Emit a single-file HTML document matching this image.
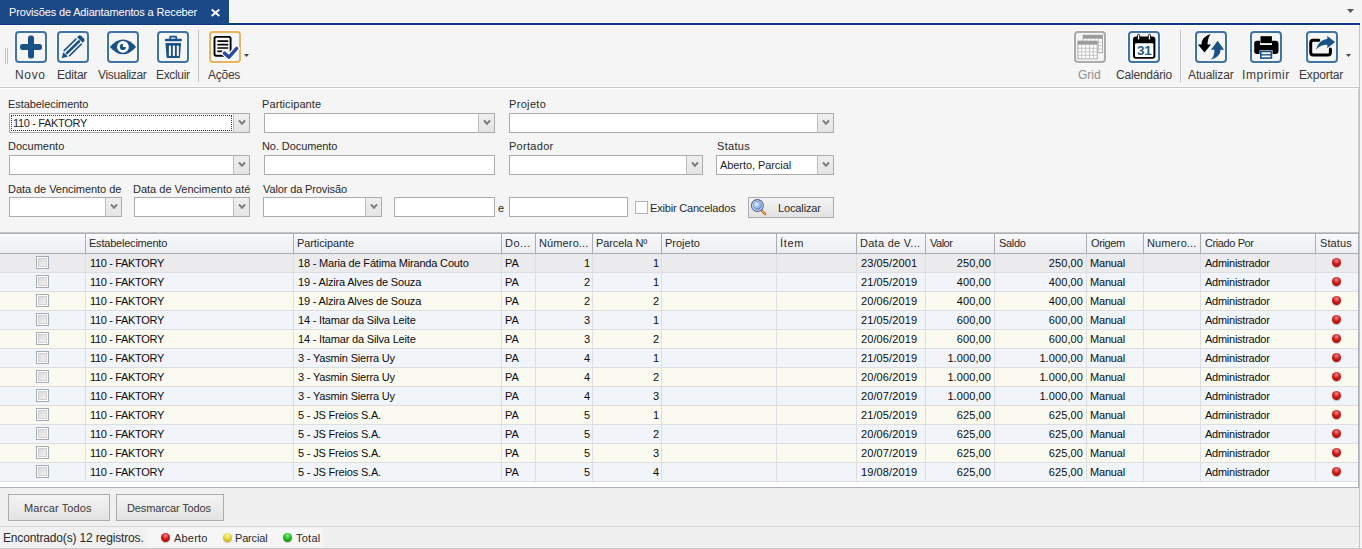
<!DOCTYPE html><html><head><meta charset="utf-8"><style>
html,body{margin:0;padding:0}
body{width:1362px;height:549px;position:relative;overflow:hidden;background:#f5f5f5;font-family:"Liberation Sans", sans-serif}
.t{position:absolute;white-space:nowrap;line-height:1}
.r{position:absolute}
.cb{background:#fff;border:1px solid #ababab}
.cbb{background:linear-gradient(#efefef,#e4e4e4);border-left:1px solid #bdbdbd}
.btn{background:linear-gradient(#f4f4f4,#e2e2e2);border:1px solid #acacac}
.ck{width:11px;height:11px;border:1px solid #a3abb7;background:#fff;box-sizing:content-box}
.ck::after{content:"";position:absolute;left:1px;top:1px;width:7px;height:7px;border:1px solid #d0d0d0;background:linear-gradient(135deg,#dcdcdc,#f0f0f0)}
.dot{width:9px;height:9px;border-radius:50%}
.red{background:radial-gradient(circle at 50% 30%,#f59090 0,#d01c1c 42%,#9a0000 100%);box-shadow:0 1px 1px rgba(0,0,0,0.25)}
.yel{background:radial-gradient(circle at 50% 30%,#fff8b0 0,#e6d63a 45%,#b09a00 100%);box-shadow:0 1px 1px rgba(0,0,0,0.2)}
.grn{background:radial-gradient(circle at 50% 30%,#90f090 0,#22b822 45%,#007a00 100%);box-shadow:0 1px 1px rgba(0,0,0,0.2)}
</style></head><body><div class="r" style="left:0px;top:0px;width:229px;height:24px;background:#1b4886;"></div>
<div class="r" style="left:229px;top:0px;width:1px;height:22px;background:#ffffff;"></div>
<div class="r" style="left:229px;top:22px;width:1131px;height:1px;background:#ffffff;"></div>
<div class="r" style="left:229px;top:23px;width:1131px;height:1px;background:#0a3a82;"></div>
<div class="r" style="left:0px;top:24px;width:1360px;height:1px;background:#0b3a80;"></div>
<div class="r" style="left:0px;top:25px;width:1359px;height:1px;background:#ffffff;"></div>
<div class="t" style="left:9px;top:6.86px;font-size:11px;color:#ffffff;letter-spacing:-0.143px;">Provisões de Adiantamentos a Receber</div>
<svg class="r" style="left:210px;top:8px" width="12" height="10"><path d="M1.7 1.6 L9.3 7.9 M9.3 1.6 L1.7 7.9" stroke="#fff" stroke-width="2"/></svg>
<svg class="r" style="left:1346px;top:8px" width="10" height="7"><path d="M1 1 H8 L4.5 5 Z" fill="#555"/></svg>
<div class="r" style="left:1359px;top:25px;width:1px;height:524px;background:#c4c4c4;"></div>
<div class="r" style="left:1358px;top:89px;width:1px;height:143px;background:#c8c8c8;"></div>
<div class="r" style="left:1357px;top:89px;width:1px;height:143px;background:#fbfbfb;"></div>
<div class="r" style="left:5px;top:48px;width:1px;height:16px;background:#c4c4c4;"></div>
<div class="r" style="left:7px;top:48px;width:1px;height:16px;background:#c4c4c4;"></div>
<div class="r" style="left:198px;top:30px;width:1px;height:52px;background:#c6c6c6;"></div>
<div class="r" style="left:1180px;top:30px;width:1px;height:52px;background:#c6c6c6;"></div>
<div class="r" style="left:0px;top:86px;width:1359px;height:1px;background:#f9f9f9;"></div>
<div class="r" style="left:0px;top:87px;width:1359px;height:1px;background:#c8c8c8;"></div>
<div class="r" style="left:0px;top:88px;width:1359px;height:1px;background:#fbfbfb;"></div>
<svg class="r" style="left:14px;top:30px" width="34" height="34" viewBox="-1 -1 34 34"><rect x="-0.5" y="-0.5" width="33" height="33" rx="4" fill="none" stroke="#fff" stroke-width="1" opacity="0.8"/><rect x="1" y="1" width="30" height="30" rx="3" fill="none" stroke="#3f74a3" stroke-width="2"/><rect x="5" y="13" width="22" height="6" rx="2.5" fill="#1a5286"/><rect x="13" y="4.5" width="6" height="23" rx="2.5" fill="#1a5286"/></svg>
<svg class="r" style="left:56px;top:30px" width="34" height="34" viewBox="-1 -1 34 34"><rect x="-0.5" y="-0.5" width="33" height="33" rx="4" fill="none" stroke="#fff" stroke-width="1" opacity="0.8"/><rect x="1" y="1" width="30" height="30" rx="3" fill="none" stroke="#3f74a3" stroke-width="2"/><g fill="#1a5286"><path d="M4.8 27.2 L6.2 21.2 L11 25.6 Z"/><path d="M7.1 19.6 L18.9 8.1" stroke="#1a5286" stroke-width="1.5" stroke-linecap="round"/><path d="M9.9 22.1 L21.9 10.5" stroke="#1a5286" stroke-width="2.6" stroke-linecap="round"/><path d="M12.6 24.6 L24.3 13.1" stroke="#1a5286" stroke-width="1.5" stroke-linecap="round"/><path d="M20.1 6.2 L21.23 5.07 Q22.79 3.51 24.37 5.04 L26.91 7.48 Q28.49 9.01 26.93 10.57 L25.8 11.7 Z"/></g></svg>
<svg class="r" style="left:106px;top:30px" width="34" height="34" viewBox="-1 -1 34 34"><rect x="-0.5" y="-0.5" width="33" height="33" rx="4" fill="none" stroke="#fff" stroke-width="1" opacity="0.8"/><rect x="1" y="1" width="30" height="30" rx="3" fill="none" stroke="#3f74a3" stroke-width="2"/><path d="M2.9 15.9 Q16 1.2 29.1 15.9 Q16 30.6 2.9 15.9 Z" fill="#1a5286"/><circle cx="15.9" cy="15.9" r="5.9" fill="#fff"/><circle cx="15.9" cy="15.9" r="3.1" fill="#1a5286"/><path d="M15.9 15.9 L15.9 12.5 A3.4 3.4 0 0 1 19.3 15.9 Z" fill="#fff"/></svg>
<svg class="r" style="left:156px;top:30px" width="34" height="34" viewBox="-1 -1 34 34"><rect x="-0.5" y="-0.5" width="33" height="33" rx="4" fill="none" stroke="#fff" stroke-width="1" opacity="0.8"/><rect x="1" y="1" width="30" height="30" rx="3" fill="none" stroke="#3f74a3" stroke-width="2"/><g fill="#1a5286"><rect x="7.8" y="7.8" width="17" height="2.4" rx="1"/><path d="M12.4 8 V5.6 Q12.4 4.8 13.2 4.8 H19.2 Q20 4.8 20 5.6 V8 H18.4 V6.4 H14 V8 Z"/><path d="M8.5 12 H24 L23 26 Q22.9 27 21.9 27 H10.6 Q9.6 27 9.5 26 Z"/></g><g fill="#fff"><rect x="11.9" y="14.7" width="2" height="10.2"/><rect x="15.8" y="14.7" width="2.1" height="10.2"/><rect x="19.8" y="14.7" width="2" height="10.2"/></g></svg>
<svg class="r" style="left:208px;top:30px" width="34" height="34" viewBox="-1 -1 34 34"><rect x="-0.5" y="-0.5" width="33" height="33" rx="4" fill="none" stroke="#fff" stroke-width="1" opacity="0.8"/><rect x="1" y="1" width="30" height="30" rx="3" fill="#f3f6fb" stroke="#eab25a" stroke-width="2"/><rect x="5.5" y="5.9" width="16.1" height="18.8" rx="1.6" fill="#fff" stroke="#000" stroke-width="1.9"/><g stroke="#000" stroke-width="1.7" stroke-linecap="round"><path d="M9 10.1 H18.6"/><path d="M9 13.6 H18.6"/><path d="M9 17 H18.6"/><path d="M9 20.3 H13"/></g><path d="M15.4 22.1 L20 26.1 L27.7 17.4" fill="none" stroke="#fff" stroke-width="6" stroke-linecap="round" stroke-linejoin="round"/><path d="M15.4 22.1 L20 26.1 L27.7 17.4" fill="none" stroke="#2f4aa0" stroke-width="3.4" stroke-linecap="round" stroke-linejoin="round"/></svg>
<svg class="r" style="left:243px;top:53px" width="8" height="6"><path d="M1 1 H6 L3.5 4 Z" fill="#444"/></svg>
<svg class="r" style="left:1073px;top:30px" width="34" height="34" viewBox="-1 -1 34 34"><rect x="-0.5" y="-0.5" width="33" height="33" rx="4" fill="none" stroke="#fff" stroke-width="1" opacity="0.8"/><rect x="1" y="1" width="30" height="30" rx="3" fill="none" stroke="#ababab" stroke-width="2"/><rect x="9.1" y="4.2" width="19.4" height="17.4" fill="#fff" stroke="#aaa" stroke-width="1"/><rect x="9.1" y="4.2" width="19.4" height="3.5" fill="#9a9a9a"/><path d="M12.98 7.7 V21.599999999999998" stroke="#c4c4c4" stroke-width="1"/><path d="M16.86 7.7 V21.599999999999998" stroke="#c4c4c4" stroke-width="1"/><path d="M20.74 7.7 V21.599999999999998" stroke="#c4c4c4" stroke-width="1"/><path d="M24.62 7.7 V21.599999999999998" stroke="#c4c4c4" stroke-width="1"/><path d="M9.1 11.18 H28.5" stroke="#c4c4c4" stroke-width="1"/><path d="M9.1 14.65 H28.5" stroke="#c4c4c4" stroke-width="1"/><path d="M9.1 18.12 H28.5" stroke="#c4c4c4" stroke-width="1"/><rect x="3.9" y="10.1" width="19.3" height="17.7" fill="#fff" stroke="#aaa" stroke-width="1"/><rect x="3.9" y="10.1" width="19.3" height="3.6" fill="#9a9a9a"/><path d="M7.76 13.7 V27.799999999999997" stroke="#c4c4c4" stroke-width="1"/><path d="M11.62 13.7 V27.799999999999997" stroke="#c4c4c4" stroke-width="1"/><path d="M15.48 13.7 V27.799999999999997" stroke="#c4c4c4" stroke-width="1"/><path d="M19.34 13.7 V27.799999999999997" stroke="#c4c4c4" stroke-width="1"/><path d="M3.9 17.22 H23.2" stroke="#c4c4c4" stroke-width="1"/><path d="M3.9 20.75 H23.2" stroke="#c4c4c4" stroke-width="1"/><path d="M3.9 24.27 H23.2" stroke="#c4c4c4" stroke-width="1"/></svg>
<svg class="r" style="left:1127px;top:30px" width="34" height="34" viewBox="-1 -1 34 34"><rect x="-0.5" y="-0.5" width="33" height="33" rx="4" fill="none" stroke="#fff" stroke-width="1" opacity="0.8"/><rect x="1" y="1" width="30" height="30" rx="3" fill="none" stroke="#3f74a3" stroke-width="2"/><rect x="5" y="5.5" width="22.4" height="22.2" rx="3" fill="#000"/><rect x="7" y="12.3" width="18.4" height="13.6" rx="1" fill="#fff"/><rect x="9.5" y="3.3" width="2.2" height="5.6" rx="1.1" fill="#fff" stroke="#000" stroke-width="0.9"/><rect x="20.3" y="3.3" width="2.2" height="5.6" rx="1.1" fill="#fff" stroke="#000" stroke-width="0.9"/><rect x="10" y="3.6" width="1.2" height="5" fill="#000" opacity="0"/><text x="16.3" y="23.8" text-anchor="middle" font-family="Liberation Sans" font-weight="bold" font-size="13.5" fill="#1f5a91" letter-spacing="-0.3">31</text></svg>
<svg class="r" style="left:1194px;top:30px" width="34" height="34" viewBox="-1 -1 34 34"><rect x="-0.5" y="-0.5" width="33" height="33" rx="4" fill="none" stroke="#fff" stroke-width="1" opacity="0.8"/><rect x="1" y="1" width="30" height="30" rx="3" fill="none" stroke="#3f74a3" stroke-width="2"/><path d="M15.8 2.9 Q6.6 5.5 6.4 13.4 H2.9 L9.5 21.6 L16 13.4 H12.5 Q12.6 6.5 15.8 2.9 Z" fill="#000"/><path d="M15.7 28.8 Q25.4 26 25.6 18.7 H29.1 L22.6 9.8 L16 18.7 H19.5 Q19.4 25.5 15.7 28.8 Z" fill="#1a5286"/></svg>
<svg class="r" style="left:1249px;top:30px" width="34" height="34" viewBox="-1 -1 34 34"><rect x="-0.5" y="-0.5" width="33" height="33" rx="4" fill="none" stroke="#fff" stroke-width="1" opacity="0.8"/><rect x="1" y="1" width="30" height="30" rx="3" fill="none" stroke="#3f74a3" stroke-width="2"/><rect x="10.5" y="5.2" width="11.4" height="6.9" fill="#000"/><path d="M7 9.8 H10 V14 H22 V9.8 H25.6 Q28.5 9.8 28.5 12.8 V20 Q28.5 22.9 25.6 22.9 H7 Q4.2 22.9 4.2 20 V12.8 Q4.2 9.8 7 9.8 Z" fill="#000"/><rect x="9.6" y="19.3" width="13" height="9" fill="#fff"/><rect x="10.8" y="20.5" width="10.6" height="6.6" fill="none" stroke="#1a5286" stroke-width="1.6"/><path d="M10.8 23.8 H21.4" stroke="#1a5286" stroke-width="1.4"/></svg>
<svg class="r" style="left:1305px;top:30px" width="34" height="34" viewBox="-1 -1 34 34"><rect x="-0.5" y="-0.5" width="33" height="33" rx="4" fill="none" stroke="#fff" stroke-width="1" opacity="0.8"/><rect x="1" y="1" width="30" height="30" rx="3" fill="none" stroke="#3f74a3" stroke-width="2"/><path d="M12.8 9.3 H7.2 Q4.7 9.3 4.7 11.8 V21.6 Q4.7 24 7.2 24 H21.9 Q24.4 24 24.4 21.6 V18" fill="none" stroke="#000" stroke-width="3" stroke-linecap="round"/><path d="M9.8 18.7 Q12.5 9.2 21.3 7.8 V4.9 L29.1 11.1 L21.3 17.3 V13.7 Q14.5 13.6 9.8 18.7 Z" fill="#1a5286"/></svg>
<svg class="r" style="left:1345px;top:53px" width="8" height="6"><path d="M1 1 H6 L3.5 4 Z" fill="#444"/></svg>
<div class="t" style="left:15px;top:69.03px;font-size:12px;color:#3a3a3a;letter-spacing:0.667px;">Novo</div>
<div class="t" style="left:57px;top:69.03px;font-size:12px;color:#3a3a3a;letter-spacing:-0.2px;">Editar</div>
<div class="t" style="left:98px;top:69.03px;font-size:12px;color:#3a3a3a;letter-spacing:-0.333px;">Visualizar</div>
<div class="t" style="left:156px;top:69.03px;font-size:12px;color:#3a3a3a;letter-spacing:-0.333px;">Excluir</div>
<div class="t" style="left:208px;top:69.03px;font-size:12px;color:#3a3a3a;letter-spacing:-0.25px;">Ações</div>
<div class="t" style="left:1078px;top:69.03px;font-size:12px;color:#8f8f8f;letter-spacing:0px;">Grid</div>
<div class="t" style="left:1116px;top:69.03px;font-size:12px;color:#3a3a3a;letter-spacing:-0.2px;">Calendário</div>
<div class="t" style="left:1188px;top:69.03px;font-size:12px;color:#3a3a3a;letter-spacing:-0.125px;">Atualizar</div>
<div class="t" style="left:1242px;top:69.03px;font-size:12px;color:#3a3a3a;letter-spacing:0.571px;">Imprimir</div>
<div class="t" style="left:1299px;top:69.03px;font-size:12px;color:#3a3a3a;letter-spacing:-0.143px;">Exportar</div>
<div class="t" style="left:8px;top:98.86px;font-size:11px;color:#2a2a2a;letter-spacing:-0.071px;">Estabelecimento</div>
<div class="r cb" style="left:9px;top:113px;width:239px;height:18px"></div>
<div class="r cbb" style="left:233px;top:114px;width:15px;height:18px"></div>
<svg class="r" style="left:238px;top:119px" width="9" height="8"><path d="M1 1.3 L4 4.8 L7 1.3" fill="none" stroke="#7a7a7a" stroke-width="2"/></svg>
<div class="r" style="left:11px;top:115px;width:219px;height:14px;border:1px dotted #333"></div>
<div class="t" style="left:13px;top:117.86px;font-size:11px;color:#1e1e1e;letter-spacing:-0.333px;">110 - FAKTORY</div>
<div class="t" style="left:262px;top:98.86px;font-size:11px;color:#2a2a2a;letter-spacing:0.091px;">Participante</div>
<div class="r cb" style="left:264px;top:113px;width:229px;height:18px"></div>
<div class="r cbb" style="left:478px;top:114px;width:15px;height:18px"></div>
<svg class="r" style="left:483px;top:119px" width="9" height="8"><path d="M1 1.3 L4 4.8 L7 1.3" fill="none" stroke="#7a7a7a" stroke-width="2"/></svg>
<div class="t" style="left:509px;top:98.86px;font-size:11px;color:#2a2a2a;letter-spacing:0.333px;">Projeto</div>
<div class="r cb" style="left:509px;top:113px;width:323px;height:18px"></div>
<div class="r cbb" style="left:817px;top:114px;width:15px;height:18px"></div>
<svg class="r" style="left:822px;top:119px" width="9" height="8"><path d="M1 1.3 L4 4.8 L7 1.3" fill="none" stroke="#7a7a7a" stroke-width="2"/></svg>
<div class="t" style="left:8px;top:140.86px;font-size:11px;color:#2a2a2a;letter-spacing:0px;">Documento</div>
<div class="r cb" style="left:9px;top:155px;width:239px;height:18px"></div>
<div class="r cbb" style="left:233px;top:156px;width:15px;height:18px"></div>
<svg class="r" style="left:238px;top:161px" width="9" height="8"><path d="M1 1.3 L4 4.8 L7 1.3" fill="none" stroke="#7a7a7a" stroke-width="2"/></svg>
<div class="t" style="left:262px;top:140.86px;font-size:11px;color:#2a2a2a;letter-spacing:-0.083px;">No. Documento</div>
<div class="r cb" style="left:264px;top:155px;width:229px;height:18px"></div>
<div class="t" style="left:509px;top:140.86px;font-size:11px;color:#2a2a2a;letter-spacing:0.286px;">Portador</div>
<div class="r cb" style="left:509px;top:155px;width:192px;height:18px"></div>
<div class="r cbb" style="left:686px;top:156px;width:15px;height:18px"></div>
<svg class="r" style="left:691px;top:161px" width="9" height="8"><path d="M1 1.3 L4 4.8 L7 1.3" fill="none" stroke="#7a7a7a" stroke-width="2"/></svg>
<div class="t" style="left:717px;top:140.86px;font-size:11px;color:#2a2a2a;letter-spacing:0.3px;">Status</div>
<div class="r cb" style="left:716px;top:155px;width:116px;height:18px"></div>
<div class="r cbb" style="left:817px;top:156px;width:15px;height:18px"></div>
<svg class="r" style="left:822px;top:161px" width="9" height="8"><path d="M1 1.3 L4 4.8 L7 1.3" fill="none" stroke="#7a7a7a" stroke-width="2"/></svg>
<div class="t" style="left:720px;top:159.86px;font-size:11px;color:#1e1e1e;letter-spacing:-0.071px;">Aberto, Parcial</div>
<div class="t" style="left:8px;top:183.86px;font-size:11px;color:#2a2a2a;letter-spacing:-0.05px;">Data de Vencimento de</div>
<div class="r cb" style="left:9px;top:197px;width:111px;height:18px"></div>
<div class="r cbb" style="left:105px;top:198px;width:15px;height:18px"></div>
<svg class="r" style="left:110px;top:203px" width="9" height="8"><path d="M1 1.3 L4 4.8 L7 1.3" fill="none" stroke="#7a7a7a" stroke-width="2"/></svg>
<div class="t" style="left:133px;top:183.86px;font-size:11px;color:#2a2a2a;letter-spacing:0px;">Data de Vencimento até</div>
<div class="r cb" style="left:134px;top:197px;width:114px;height:18px"></div>
<div class="r cbb" style="left:233px;top:198px;width:15px;height:18px"></div>
<svg class="r" style="left:238px;top:203px" width="9" height="8"><path d="M1 1.3 L4 4.8 L7 1.3" fill="none" stroke="#7a7a7a" stroke-width="2"/></svg>
<div class="t" style="left:263px;top:183.86px;font-size:11px;color:#2a2a2a;letter-spacing:-0.125px;">Valor da Provisão</div>
<div class="r cb" style="left:263px;top:197px;width:117px;height:18px"></div>
<div class="r cbb" style="left:365px;top:198px;width:15px;height:18px"></div>
<svg class="r" style="left:370px;top:203px" width="9" height="8"><path d="M1 1.3 L4 4.8 L7 1.3" fill="none" stroke="#7a7a7a" stroke-width="2"/></svg>
<div class="r cb" style="left:394px;top:197px;width:99px;height:18px"></div>
<div class="t" style="left:498px;top:202.86px;font-size:11px;color:#2a2a2a;letter-spacing:-0.3px;">e</div>
<div class="r cb" style="left:509px;top:197px;width:117px;height:18px"></div>
<div class="r" style="left:635px;top:201px;width:11px;height:11px;border:1px solid #b4b4b4;background:#fff"></div>
<div class="t" style="left:650px;top:202.86px;font-size:11px;color:#2a2a2a;letter-spacing:-0.188px;">Exibir Cancelados</div>
<div class="r btn" style="left:748px;top:197px;width:84px;height:19px"></div>
<svg class="r" style="left:750px;top:199px" width="18" height="18"><defs><radialGradient id="lg" cx="0.4" cy="0.35" r="0.7"><stop offset="0" stop-color="#eaf3ff"/><stop offset="0.6" stop-color="#8fb8ea"/><stop offset="1" stop-color="#4c7fc4"/></radialGradient></defs><path d="M11.4 11.2 L15.1 15.1" stroke="#c47a35" stroke-width="2.4" stroke-linecap="round"/><path d="M11.6 11.2 L14.9 14.7" stroke="#f0b070" stroke-width="0.8" stroke-linecap="round"/><circle cx="7.4" cy="6.5" r="5.9" fill="#fff" stroke="#4b5d9c" stroke-width="1.2"/><circle cx="7.4" cy="6.5" r="4.2" fill="url(#lg)" stroke="#5f80c0" stroke-width="0.7"/></svg>
<div class="t" style="left:778px;top:202.86px;font-size:11px;color:#2a2a2a;letter-spacing:-0.125px;">Localizar</div>
<div class="r" style="left:0px;top:232px;width:1359px;height:1px;background:#c6c6c6;"></div>
<div class="r" style="left:0px;top:233px;width:1359px;height:1px;background:#a9aeb6;"></div>
<div class="r" style="left:0;top:234px;width:1358px;height:19px;background:linear-gradient(#f6f8fa,#eceef2);border-top:1px solid #fff;box-sizing:border-box"></div>
<div class="r" style="left:0px;top:253px;width:1358px;height:1px;background:#a9aeb6;"></div>
<div class="r" style="left:1358px;top:232px;width:1px;height:256px;background:#a9aeb6;"></div>
<div class="r" style="left:0px;top:254px;width:1358px;height:233px;background:#ffffff;"></div>
<div class="r" style="left:0px;top:487px;width:1359px;height:1px;background:#a9aeb6;"></div>
<div class="r" style="left:85px;top:234px;width:1px;height:19px;background:#a9aeb6;"></div>
<div class="r" style="left:293px;top:234px;width:1px;height:19px;background:#a9aeb6;"></div>
<div class="r" style="left:501px;top:234px;width:1px;height:19px;background:#a9aeb6;"></div>
<div class="r" style="left:535px;top:234px;width:1px;height:19px;background:#a9aeb6;"></div>
<div class="r" style="left:592px;top:234px;width:1px;height:19px;background:#a9aeb6;"></div>
<div class="r" style="left:661px;top:234px;width:1px;height:19px;background:#a9aeb6;"></div>
<div class="r" style="left:776px;top:234px;width:1px;height:19px;background:#a9aeb6;"></div>
<div class="r" style="left:856px;top:234px;width:1px;height:19px;background:#a9aeb6;"></div>
<div class="r" style="left:925px;top:234px;width:1px;height:19px;background:#a9aeb6;"></div>
<div class="r" style="left:994px;top:234px;width:1px;height:19px;background:#a9aeb6;"></div>
<div class="r" style="left:1086px;top:234px;width:1px;height:19px;background:#a9aeb6;"></div>
<div class="r" style="left:1143px;top:234px;width:1px;height:19px;background:#a9aeb6;"></div>
<div class="r" style="left:1200px;top:234px;width:1px;height:19px;background:#a9aeb6;"></div>
<div class="r" style="left:1315px;top:234px;width:1px;height:19px;background:#a9aeb6;"></div>
<div class="t" style="left:89px;top:237.86px;font-size:11px;color:#2a2a2a;letter-spacing:-0.214px;">Estabelecimento</div>
<div class="t" style="left:297px;top:237.86px;font-size:11px;color:#2a2a2a;letter-spacing:-0.091px;">Participante</div>
<div class="t" style="left:505px;top:237.86px;font-size:11px;color:#2a2a2a;letter-spacing:0.5px;">Do...</div>
<div class="t" style="left:539px;top:237.86px;font-size:11px;color:#2a2a2a;letter-spacing:0.125px;">Número...</div>
<div class="t" style="left:596px;top:237.86px;font-size:11px;color:#2a2a2a;letter-spacing:-0.111px;">Parcela Nº</div>
<div class="t" style="left:665px;top:237.86px;font-size:11px;color:#2a2a2a;letter-spacing:0px;">Projeto</div>
<div class="t" style="left:780px;top:237.86px;font-size:11px;color:#2a2a2a;letter-spacing:0.667px;">Ítem</div>
<div class="t" style="left:860px;top:237.86px;font-size:11px;color:#2a2a2a;letter-spacing:0.273px;">Data de V...</div>
<div class="t" style="left:930px;top:237.86px;font-size:11px;color:#2a2a2a;letter-spacing:-0.5px;">Valor</div>
<div class="t" style="left:999px;top:237.86px;font-size:11px;color:#2a2a2a;letter-spacing:-0.3px;">Saldo</div>
<div class="t" style="left:1091px;top:237.86px;font-size:11px;color:#2a2a2a;letter-spacing:-0.4px;">Origem</div>
<div class="t" style="left:1147px;top:237.86px;font-size:11px;color:#2a2a2a;letter-spacing:0.125px;">Numero...</div>
<div class="t" style="left:1205px;top:237.86px;font-size:11px;color:#2a2a2a;letter-spacing:-0.4px;">Criado Por</div>
<div class="t" style="left:1320px;top:237.86px;font-size:11px;color:#2a2a2a;letter-spacing:0.1px;">Status</div>
<div class="r" style="left:0px;top:254px;width:1358px;height:18px;background:#ebebed;"></div>
<div class="r" style="left:0px;top:272px;width:1358px;height:1px;background:#dcdee2;"></div>
<div class="r" style="left:85px;top:254px;width:1px;height:18px;background:#dcdee2;"></div>
<div class="r" style="left:293px;top:254px;width:1px;height:18px;background:#dcdee2;"></div>
<div class="r" style="left:501px;top:254px;width:1px;height:18px;background:#dcdee2;"></div>
<div class="r" style="left:535px;top:254px;width:1px;height:18px;background:#dcdee2;"></div>
<div class="r" style="left:592px;top:254px;width:1px;height:18px;background:#dcdee2;"></div>
<div class="r" style="left:661px;top:254px;width:1px;height:18px;background:#dcdee2;"></div>
<div class="r" style="left:776px;top:254px;width:1px;height:18px;background:#dcdee2;"></div>
<div class="r" style="left:856px;top:254px;width:1px;height:18px;background:#dcdee2;"></div>
<div class="r" style="left:925px;top:254px;width:1px;height:18px;background:#dcdee2;"></div>
<div class="r" style="left:994px;top:254px;width:1px;height:18px;background:#dcdee2;"></div>
<div class="r" style="left:1086px;top:254px;width:1px;height:18px;background:#dcdee2;"></div>
<div class="r" style="left:1143px;top:254px;width:1px;height:18px;background:#dcdee2;"></div>
<div class="r" style="left:1200px;top:254px;width:1px;height:18px;background:#dcdee2;"></div>
<div class="r" style="left:1315px;top:254px;width:1px;height:18px;background:#dcdee2;"></div>
<div class="r ck" style="left:36px;top:256px"></div>
<div class="t" style="left:90px;top:257.86px;font-size:11px;color:#0c0c0c;letter-spacing:-0.333px;">110 - FAKTORY</div>
<div class="t" style="left:298px;top:257.86px;font-size:11px;color:#0c0c0c;letter-spacing:-0.18px;">18 - Maria de Fátima Miranda Couto</div>
<div class="t" style="left:505px;top:257.86px;font-size:11px;color:#0c0c0c;letter-spacing:0px;">PA</div>
<div class="t" style="right:772px;top:257.86px;font-size:11px;color:#0c0c0c;letter-spacing:0px;">1</div>
<div class="t" style="right:703px;top:257.86px;font-size:11px;color:#0c0c0c;letter-spacing:0px;">1</div>
<div class="t" style="left:861px;top:257.86px;font-size:11px;color:#0c0c0c;letter-spacing:0.111px;">23/05/2001</div>
<div class="t" style="right:371px;top:257.86px;font-size:11px;color:#0c0c0c;letter-spacing:0.1px;">250,00</div>
<div class="t" style="right:279px;top:257.86px;font-size:11px;color:#0c0c0c;letter-spacing:0.1px;">250,00</div>
<div class="t" style="left:1090px;top:257.86px;font-size:11px;color:#0c0c0c;letter-spacing:-0.2px;">Manual</div>
<div class="t" style="left:1205px;top:257.86px;font-size:11px;color:#0c0c0c;letter-spacing:-0.25px;">Administrador</div>
<div class="r dot red" style="left:1332px;top:258px"></div>
<div class="r" style="left:0px;top:273px;width:1358px;height:18px;background:#f1f4f9;"></div>
<div class="r" style="left:0px;top:291px;width:1358px;height:1px;background:#dcdee2;"></div>
<div class="r" style="left:85px;top:273px;width:1px;height:18px;background:#dcdee2;"></div>
<div class="r" style="left:293px;top:273px;width:1px;height:18px;background:#dcdee2;"></div>
<div class="r" style="left:501px;top:273px;width:1px;height:18px;background:#dcdee2;"></div>
<div class="r" style="left:535px;top:273px;width:1px;height:18px;background:#dcdee2;"></div>
<div class="r" style="left:592px;top:273px;width:1px;height:18px;background:#dcdee2;"></div>
<div class="r" style="left:661px;top:273px;width:1px;height:18px;background:#dcdee2;"></div>
<div class="r" style="left:776px;top:273px;width:1px;height:18px;background:#dcdee2;"></div>
<div class="r" style="left:856px;top:273px;width:1px;height:18px;background:#dcdee2;"></div>
<div class="r" style="left:925px;top:273px;width:1px;height:18px;background:#dcdee2;"></div>
<div class="r" style="left:994px;top:273px;width:1px;height:18px;background:#dcdee2;"></div>
<div class="r" style="left:1086px;top:273px;width:1px;height:18px;background:#dcdee2;"></div>
<div class="r" style="left:1143px;top:273px;width:1px;height:18px;background:#dcdee2;"></div>
<div class="r" style="left:1200px;top:273px;width:1px;height:18px;background:#dcdee2;"></div>
<div class="r" style="left:1315px;top:273px;width:1px;height:18px;background:#dcdee2;"></div>
<div class="r ck" style="left:36px;top:275px"></div>
<div class="t" style="left:90px;top:276.86px;font-size:11px;color:#0c0c0c;letter-spacing:-0.333px;">110 - FAKTORY</div>
<div class="t" style="left:298px;top:276.86px;font-size:11px;color:#0c0c0c;letter-spacing:-0.18px;">19 - Alzira Alves de Souza</div>
<div class="t" style="left:505px;top:276.86px;font-size:11px;color:#0c0c0c;letter-spacing:0px;">PA</div>
<div class="t" style="right:772px;top:276.86px;font-size:11px;color:#0c0c0c;letter-spacing:0px;">2</div>
<div class="t" style="right:703px;top:276.86px;font-size:11px;color:#0c0c0c;letter-spacing:0px;">1</div>
<div class="t" style="left:861px;top:276.86px;font-size:11px;color:#0c0c0c;letter-spacing:0.111px;">21/05/2019</div>
<div class="t" style="right:371px;top:276.86px;font-size:11px;color:#0c0c0c;letter-spacing:0.1px;">400,00</div>
<div class="t" style="right:279px;top:276.86px;font-size:11px;color:#0c0c0c;letter-spacing:0.1px;">400,00</div>
<div class="t" style="left:1090px;top:276.86px;font-size:11px;color:#0c0c0c;letter-spacing:-0.2px;">Manual</div>
<div class="t" style="left:1205px;top:276.86px;font-size:11px;color:#0c0c0c;letter-spacing:-0.25px;">Administrador</div>
<div class="r dot red" style="left:1332px;top:277px"></div>
<div class="r" style="left:0px;top:292px;width:1358px;height:18px;background:#fafaf1;"></div>
<div class="r" style="left:0px;top:310px;width:1358px;height:1px;background:#dcdee2;"></div>
<div class="r" style="left:85px;top:292px;width:1px;height:18px;background:#dcdee2;"></div>
<div class="r" style="left:293px;top:292px;width:1px;height:18px;background:#dcdee2;"></div>
<div class="r" style="left:501px;top:292px;width:1px;height:18px;background:#dcdee2;"></div>
<div class="r" style="left:535px;top:292px;width:1px;height:18px;background:#dcdee2;"></div>
<div class="r" style="left:592px;top:292px;width:1px;height:18px;background:#dcdee2;"></div>
<div class="r" style="left:661px;top:292px;width:1px;height:18px;background:#dcdee2;"></div>
<div class="r" style="left:776px;top:292px;width:1px;height:18px;background:#dcdee2;"></div>
<div class="r" style="left:856px;top:292px;width:1px;height:18px;background:#dcdee2;"></div>
<div class="r" style="left:925px;top:292px;width:1px;height:18px;background:#dcdee2;"></div>
<div class="r" style="left:994px;top:292px;width:1px;height:18px;background:#dcdee2;"></div>
<div class="r" style="left:1086px;top:292px;width:1px;height:18px;background:#dcdee2;"></div>
<div class="r" style="left:1143px;top:292px;width:1px;height:18px;background:#dcdee2;"></div>
<div class="r" style="left:1200px;top:292px;width:1px;height:18px;background:#dcdee2;"></div>
<div class="r" style="left:1315px;top:292px;width:1px;height:18px;background:#dcdee2;"></div>
<div class="r ck" style="left:36px;top:294px"></div>
<div class="t" style="left:90px;top:295.86px;font-size:11px;color:#0c0c0c;letter-spacing:-0.333px;">110 - FAKTORY</div>
<div class="t" style="left:298px;top:295.86px;font-size:11px;color:#0c0c0c;letter-spacing:-0.18px;">19 - Alzira Alves de Souza</div>
<div class="t" style="left:505px;top:295.86px;font-size:11px;color:#0c0c0c;letter-spacing:0px;">PA</div>
<div class="t" style="right:772px;top:295.86px;font-size:11px;color:#0c0c0c;letter-spacing:0px;">2</div>
<div class="t" style="right:703px;top:295.86px;font-size:11px;color:#0c0c0c;letter-spacing:0px;">2</div>
<div class="t" style="left:861px;top:295.86px;font-size:11px;color:#0c0c0c;letter-spacing:0.111px;">20/06/2019</div>
<div class="t" style="right:371px;top:295.86px;font-size:11px;color:#0c0c0c;letter-spacing:0.1px;">400,00</div>
<div class="t" style="right:279px;top:295.86px;font-size:11px;color:#0c0c0c;letter-spacing:0.1px;">400,00</div>
<div class="t" style="left:1090px;top:295.86px;font-size:11px;color:#0c0c0c;letter-spacing:-0.2px;">Manual</div>
<div class="t" style="left:1205px;top:295.86px;font-size:11px;color:#0c0c0c;letter-spacing:-0.25px;">Administrador</div>
<div class="r dot red" style="left:1332px;top:296px"></div>
<div class="r" style="left:0px;top:311px;width:1358px;height:18px;background:#f1f4f9;"></div>
<div class="r" style="left:0px;top:329px;width:1358px;height:1px;background:#dcdee2;"></div>
<div class="r" style="left:85px;top:311px;width:1px;height:18px;background:#dcdee2;"></div>
<div class="r" style="left:293px;top:311px;width:1px;height:18px;background:#dcdee2;"></div>
<div class="r" style="left:501px;top:311px;width:1px;height:18px;background:#dcdee2;"></div>
<div class="r" style="left:535px;top:311px;width:1px;height:18px;background:#dcdee2;"></div>
<div class="r" style="left:592px;top:311px;width:1px;height:18px;background:#dcdee2;"></div>
<div class="r" style="left:661px;top:311px;width:1px;height:18px;background:#dcdee2;"></div>
<div class="r" style="left:776px;top:311px;width:1px;height:18px;background:#dcdee2;"></div>
<div class="r" style="left:856px;top:311px;width:1px;height:18px;background:#dcdee2;"></div>
<div class="r" style="left:925px;top:311px;width:1px;height:18px;background:#dcdee2;"></div>
<div class="r" style="left:994px;top:311px;width:1px;height:18px;background:#dcdee2;"></div>
<div class="r" style="left:1086px;top:311px;width:1px;height:18px;background:#dcdee2;"></div>
<div class="r" style="left:1143px;top:311px;width:1px;height:18px;background:#dcdee2;"></div>
<div class="r" style="left:1200px;top:311px;width:1px;height:18px;background:#dcdee2;"></div>
<div class="r" style="left:1315px;top:311px;width:1px;height:18px;background:#dcdee2;"></div>
<div class="r ck" style="left:36px;top:313px"></div>
<div class="t" style="left:90px;top:314.86px;font-size:11px;color:#0c0c0c;letter-spacing:-0.333px;">110 - FAKTORY</div>
<div class="t" style="left:298px;top:314.86px;font-size:11px;color:#0c0c0c;letter-spacing:-0.18px;">14 - Itamar da Silva Leite</div>
<div class="t" style="left:505px;top:314.86px;font-size:11px;color:#0c0c0c;letter-spacing:0px;">PA</div>
<div class="t" style="right:772px;top:314.86px;font-size:11px;color:#0c0c0c;letter-spacing:0px;">3</div>
<div class="t" style="right:703px;top:314.86px;font-size:11px;color:#0c0c0c;letter-spacing:0px;">1</div>
<div class="t" style="left:861px;top:314.86px;font-size:11px;color:#0c0c0c;letter-spacing:0.111px;">21/05/2019</div>
<div class="t" style="right:371px;top:314.86px;font-size:11px;color:#0c0c0c;letter-spacing:0.1px;">600,00</div>
<div class="t" style="right:279px;top:314.86px;font-size:11px;color:#0c0c0c;letter-spacing:0.1px;">600,00</div>
<div class="t" style="left:1090px;top:314.86px;font-size:11px;color:#0c0c0c;letter-spacing:-0.2px;">Manual</div>
<div class="t" style="left:1205px;top:314.86px;font-size:11px;color:#0c0c0c;letter-spacing:-0.25px;">Administrador</div>
<div class="r dot red" style="left:1332px;top:315px"></div>
<div class="r" style="left:0px;top:330px;width:1358px;height:18px;background:#fafaf1;"></div>
<div class="r" style="left:0px;top:348px;width:1358px;height:1px;background:#dcdee2;"></div>
<div class="r" style="left:85px;top:330px;width:1px;height:18px;background:#dcdee2;"></div>
<div class="r" style="left:293px;top:330px;width:1px;height:18px;background:#dcdee2;"></div>
<div class="r" style="left:501px;top:330px;width:1px;height:18px;background:#dcdee2;"></div>
<div class="r" style="left:535px;top:330px;width:1px;height:18px;background:#dcdee2;"></div>
<div class="r" style="left:592px;top:330px;width:1px;height:18px;background:#dcdee2;"></div>
<div class="r" style="left:661px;top:330px;width:1px;height:18px;background:#dcdee2;"></div>
<div class="r" style="left:776px;top:330px;width:1px;height:18px;background:#dcdee2;"></div>
<div class="r" style="left:856px;top:330px;width:1px;height:18px;background:#dcdee2;"></div>
<div class="r" style="left:925px;top:330px;width:1px;height:18px;background:#dcdee2;"></div>
<div class="r" style="left:994px;top:330px;width:1px;height:18px;background:#dcdee2;"></div>
<div class="r" style="left:1086px;top:330px;width:1px;height:18px;background:#dcdee2;"></div>
<div class="r" style="left:1143px;top:330px;width:1px;height:18px;background:#dcdee2;"></div>
<div class="r" style="left:1200px;top:330px;width:1px;height:18px;background:#dcdee2;"></div>
<div class="r" style="left:1315px;top:330px;width:1px;height:18px;background:#dcdee2;"></div>
<div class="r ck" style="left:36px;top:332px"></div>
<div class="t" style="left:90px;top:333.86px;font-size:11px;color:#0c0c0c;letter-spacing:-0.333px;">110 - FAKTORY</div>
<div class="t" style="left:298px;top:333.86px;font-size:11px;color:#0c0c0c;letter-spacing:-0.18px;">14 - Itamar da Silva Leite</div>
<div class="t" style="left:505px;top:333.86px;font-size:11px;color:#0c0c0c;letter-spacing:0px;">PA</div>
<div class="t" style="right:772px;top:333.86px;font-size:11px;color:#0c0c0c;letter-spacing:0px;">3</div>
<div class="t" style="right:703px;top:333.86px;font-size:11px;color:#0c0c0c;letter-spacing:0px;">2</div>
<div class="t" style="left:861px;top:333.86px;font-size:11px;color:#0c0c0c;letter-spacing:0.111px;">20/06/2019</div>
<div class="t" style="right:371px;top:333.86px;font-size:11px;color:#0c0c0c;letter-spacing:0.1px;">600,00</div>
<div class="t" style="right:279px;top:333.86px;font-size:11px;color:#0c0c0c;letter-spacing:0.1px;">600,00</div>
<div class="t" style="left:1090px;top:333.86px;font-size:11px;color:#0c0c0c;letter-spacing:-0.2px;">Manual</div>
<div class="t" style="left:1205px;top:333.86px;font-size:11px;color:#0c0c0c;letter-spacing:-0.25px;">Administrador</div>
<div class="r dot red" style="left:1332px;top:334px"></div>
<div class="r" style="left:0px;top:349px;width:1358px;height:18px;background:#f1f4f9;"></div>
<div class="r" style="left:0px;top:367px;width:1358px;height:1px;background:#dcdee2;"></div>
<div class="r" style="left:85px;top:349px;width:1px;height:18px;background:#dcdee2;"></div>
<div class="r" style="left:293px;top:349px;width:1px;height:18px;background:#dcdee2;"></div>
<div class="r" style="left:501px;top:349px;width:1px;height:18px;background:#dcdee2;"></div>
<div class="r" style="left:535px;top:349px;width:1px;height:18px;background:#dcdee2;"></div>
<div class="r" style="left:592px;top:349px;width:1px;height:18px;background:#dcdee2;"></div>
<div class="r" style="left:661px;top:349px;width:1px;height:18px;background:#dcdee2;"></div>
<div class="r" style="left:776px;top:349px;width:1px;height:18px;background:#dcdee2;"></div>
<div class="r" style="left:856px;top:349px;width:1px;height:18px;background:#dcdee2;"></div>
<div class="r" style="left:925px;top:349px;width:1px;height:18px;background:#dcdee2;"></div>
<div class="r" style="left:994px;top:349px;width:1px;height:18px;background:#dcdee2;"></div>
<div class="r" style="left:1086px;top:349px;width:1px;height:18px;background:#dcdee2;"></div>
<div class="r" style="left:1143px;top:349px;width:1px;height:18px;background:#dcdee2;"></div>
<div class="r" style="left:1200px;top:349px;width:1px;height:18px;background:#dcdee2;"></div>
<div class="r" style="left:1315px;top:349px;width:1px;height:18px;background:#dcdee2;"></div>
<div class="r ck" style="left:36px;top:351px"></div>
<div class="t" style="left:90px;top:352.86px;font-size:11px;color:#0c0c0c;letter-spacing:-0.333px;">110 - FAKTORY</div>
<div class="t" style="left:298px;top:352.86px;font-size:11px;color:#0c0c0c;letter-spacing:-0.18px;">3 - Yasmin Sierra Uy</div>
<div class="t" style="left:505px;top:352.86px;font-size:11px;color:#0c0c0c;letter-spacing:0px;">PA</div>
<div class="t" style="right:772px;top:352.86px;font-size:11px;color:#0c0c0c;letter-spacing:0px;">4</div>
<div class="t" style="right:703px;top:352.86px;font-size:11px;color:#0c0c0c;letter-spacing:0px;">1</div>
<div class="t" style="left:861px;top:352.86px;font-size:11px;color:#0c0c0c;letter-spacing:0.111px;">21/05/2019</div>
<div class="t" style="right:371px;top:352.86px;font-size:11px;color:#0c0c0c;letter-spacing:0.1px;">1.000,00</div>
<div class="t" style="right:279px;top:352.86px;font-size:11px;color:#0c0c0c;letter-spacing:0.1px;">1.000,00</div>
<div class="t" style="left:1090px;top:352.86px;font-size:11px;color:#0c0c0c;letter-spacing:-0.2px;">Manual</div>
<div class="t" style="left:1205px;top:352.86px;font-size:11px;color:#0c0c0c;letter-spacing:-0.25px;">Administrador</div>
<div class="r dot red" style="left:1332px;top:353px"></div>
<div class="r" style="left:0px;top:368px;width:1358px;height:18px;background:#fafaf1;"></div>
<div class="r" style="left:0px;top:386px;width:1358px;height:1px;background:#dcdee2;"></div>
<div class="r" style="left:85px;top:368px;width:1px;height:18px;background:#dcdee2;"></div>
<div class="r" style="left:293px;top:368px;width:1px;height:18px;background:#dcdee2;"></div>
<div class="r" style="left:501px;top:368px;width:1px;height:18px;background:#dcdee2;"></div>
<div class="r" style="left:535px;top:368px;width:1px;height:18px;background:#dcdee2;"></div>
<div class="r" style="left:592px;top:368px;width:1px;height:18px;background:#dcdee2;"></div>
<div class="r" style="left:661px;top:368px;width:1px;height:18px;background:#dcdee2;"></div>
<div class="r" style="left:776px;top:368px;width:1px;height:18px;background:#dcdee2;"></div>
<div class="r" style="left:856px;top:368px;width:1px;height:18px;background:#dcdee2;"></div>
<div class="r" style="left:925px;top:368px;width:1px;height:18px;background:#dcdee2;"></div>
<div class="r" style="left:994px;top:368px;width:1px;height:18px;background:#dcdee2;"></div>
<div class="r" style="left:1086px;top:368px;width:1px;height:18px;background:#dcdee2;"></div>
<div class="r" style="left:1143px;top:368px;width:1px;height:18px;background:#dcdee2;"></div>
<div class="r" style="left:1200px;top:368px;width:1px;height:18px;background:#dcdee2;"></div>
<div class="r" style="left:1315px;top:368px;width:1px;height:18px;background:#dcdee2;"></div>
<div class="r ck" style="left:36px;top:370px"></div>
<div class="t" style="left:90px;top:371.86px;font-size:11px;color:#0c0c0c;letter-spacing:-0.333px;">110 - FAKTORY</div>
<div class="t" style="left:298px;top:371.86px;font-size:11px;color:#0c0c0c;letter-spacing:-0.18px;">3 - Yasmin Sierra Uy</div>
<div class="t" style="left:505px;top:371.86px;font-size:11px;color:#0c0c0c;letter-spacing:0px;">PA</div>
<div class="t" style="right:772px;top:371.86px;font-size:11px;color:#0c0c0c;letter-spacing:0px;">4</div>
<div class="t" style="right:703px;top:371.86px;font-size:11px;color:#0c0c0c;letter-spacing:0px;">2</div>
<div class="t" style="left:861px;top:371.86px;font-size:11px;color:#0c0c0c;letter-spacing:0.111px;">20/06/2019</div>
<div class="t" style="right:371px;top:371.86px;font-size:11px;color:#0c0c0c;letter-spacing:0.1px;">1.000,00</div>
<div class="t" style="right:279px;top:371.86px;font-size:11px;color:#0c0c0c;letter-spacing:0.1px;">1.000,00</div>
<div class="t" style="left:1090px;top:371.86px;font-size:11px;color:#0c0c0c;letter-spacing:-0.2px;">Manual</div>
<div class="t" style="left:1205px;top:371.86px;font-size:11px;color:#0c0c0c;letter-spacing:-0.25px;">Administrador</div>
<div class="r dot red" style="left:1332px;top:372px"></div>
<div class="r" style="left:0px;top:387px;width:1358px;height:18px;background:#f1f4f9;"></div>
<div class="r" style="left:0px;top:405px;width:1358px;height:1px;background:#dcdee2;"></div>
<div class="r" style="left:85px;top:387px;width:1px;height:18px;background:#dcdee2;"></div>
<div class="r" style="left:293px;top:387px;width:1px;height:18px;background:#dcdee2;"></div>
<div class="r" style="left:501px;top:387px;width:1px;height:18px;background:#dcdee2;"></div>
<div class="r" style="left:535px;top:387px;width:1px;height:18px;background:#dcdee2;"></div>
<div class="r" style="left:592px;top:387px;width:1px;height:18px;background:#dcdee2;"></div>
<div class="r" style="left:661px;top:387px;width:1px;height:18px;background:#dcdee2;"></div>
<div class="r" style="left:776px;top:387px;width:1px;height:18px;background:#dcdee2;"></div>
<div class="r" style="left:856px;top:387px;width:1px;height:18px;background:#dcdee2;"></div>
<div class="r" style="left:925px;top:387px;width:1px;height:18px;background:#dcdee2;"></div>
<div class="r" style="left:994px;top:387px;width:1px;height:18px;background:#dcdee2;"></div>
<div class="r" style="left:1086px;top:387px;width:1px;height:18px;background:#dcdee2;"></div>
<div class="r" style="left:1143px;top:387px;width:1px;height:18px;background:#dcdee2;"></div>
<div class="r" style="left:1200px;top:387px;width:1px;height:18px;background:#dcdee2;"></div>
<div class="r" style="left:1315px;top:387px;width:1px;height:18px;background:#dcdee2;"></div>
<div class="r ck" style="left:36px;top:389px"></div>
<div class="t" style="left:90px;top:390.86px;font-size:11px;color:#0c0c0c;letter-spacing:-0.333px;">110 - FAKTORY</div>
<div class="t" style="left:298px;top:390.86px;font-size:11px;color:#0c0c0c;letter-spacing:-0.18px;">3 - Yasmin Sierra Uy</div>
<div class="t" style="left:505px;top:390.86px;font-size:11px;color:#0c0c0c;letter-spacing:0px;">PA</div>
<div class="t" style="right:772px;top:390.86px;font-size:11px;color:#0c0c0c;letter-spacing:0px;">4</div>
<div class="t" style="right:703px;top:390.86px;font-size:11px;color:#0c0c0c;letter-spacing:0px;">3</div>
<div class="t" style="left:861px;top:390.86px;font-size:11px;color:#0c0c0c;letter-spacing:0.111px;">20/07/2019</div>
<div class="t" style="right:371px;top:390.86px;font-size:11px;color:#0c0c0c;letter-spacing:0.1px;">1.000,00</div>
<div class="t" style="right:279px;top:390.86px;font-size:11px;color:#0c0c0c;letter-spacing:0.1px;">1.000,00</div>
<div class="t" style="left:1090px;top:390.86px;font-size:11px;color:#0c0c0c;letter-spacing:-0.2px;">Manual</div>
<div class="t" style="left:1205px;top:390.86px;font-size:11px;color:#0c0c0c;letter-spacing:-0.25px;">Administrador</div>
<div class="r dot red" style="left:1332px;top:391px"></div>
<div class="r" style="left:0px;top:406px;width:1358px;height:18px;background:#fafaf1;"></div>
<div class="r" style="left:0px;top:424px;width:1358px;height:1px;background:#dcdee2;"></div>
<div class="r" style="left:85px;top:406px;width:1px;height:18px;background:#dcdee2;"></div>
<div class="r" style="left:293px;top:406px;width:1px;height:18px;background:#dcdee2;"></div>
<div class="r" style="left:501px;top:406px;width:1px;height:18px;background:#dcdee2;"></div>
<div class="r" style="left:535px;top:406px;width:1px;height:18px;background:#dcdee2;"></div>
<div class="r" style="left:592px;top:406px;width:1px;height:18px;background:#dcdee2;"></div>
<div class="r" style="left:661px;top:406px;width:1px;height:18px;background:#dcdee2;"></div>
<div class="r" style="left:776px;top:406px;width:1px;height:18px;background:#dcdee2;"></div>
<div class="r" style="left:856px;top:406px;width:1px;height:18px;background:#dcdee2;"></div>
<div class="r" style="left:925px;top:406px;width:1px;height:18px;background:#dcdee2;"></div>
<div class="r" style="left:994px;top:406px;width:1px;height:18px;background:#dcdee2;"></div>
<div class="r" style="left:1086px;top:406px;width:1px;height:18px;background:#dcdee2;"></div>
<div class="r" style="left:1143px;top:406px;width:1px;height:18px;background:#dcdee2;"></div>
<div class="r" style="left:1200px;top:406px;width:1px;height:18px;background:#dcdee2;"></div>
<div class="r" style="left:1315px;top:406px;width:1px;height:18px;background:#dcdee2;"></div>
<div class="r ck" style="left:36px;top:408px"></div>
<div class="t" style="left:90px;top:409.86px;font-size:11px;color:#0c0c0c;letter-spacing:-0.333px;">110 - FAKTORY</div>
<div class="t" style="left:298px;top:409.86px;font-size:11px;color:#0c0c0c;letter-spacing:-0.18px;">5 - JS Freios S.A.</div>
<div class="t" style="left:505px;top:409.86px;font-size:11px;color:#0c0c0c;letter-spacing:0px;">PA</div>
<div class="t" style="right:772px;top:409.86px;font-size:11px;color:#0c0c0c;letter-spacing:0px;">5</div>
<div class="t" style="right:703px;top:409.86px;font-size:11px;color:#0c0c0c;letter-spacing:0px;">1</div>
<div class="t" style="left:861px;top:409.86px;font-size:11px;color:#0c0c0c;letter-spacing:0.111px;">21/05/2019</div>
<div class="t" style="right:371px;top:409.86px;font-size:11px;color:#0c0c0c;letter-spacing:0.1px;">625,00</div>
<div class="t" style="right:279px;top:409.86px;font-size:11px;color:#0c0c0c;letter-spacing:0.1px;">625,00</div>
<div class="t" style="left:1090px;top:409.86px;font-size:11px;color:#0c0c0c;letter-spacing:-0.2px;">Manual</div>
<div class="t" style="left:1205px;top:409.86px;font-size:11px;color:#0c0c0c;letter-spacing:-0.25px;">Administrador</div>
<div class="r dot red" style="left:1332px;top:410px"></div>
<div class="r" style="left:0px;top:425px;width:1358px;height:18px;background:#f1f4f9;"></div>
<div class="r" style="left:0px;top:443px;width:1358px;height:1px;background:#dcdee2;"></div>
<div class="r" style="left:85px;top:425px;width:1px;height:18px;background:#dcdee2;"></div>
<div class="r" style="left:293px;top:425px;width:1px;height:18px;background:#dcdee2;"></div>
<div class="r" style="left:501px;top:425px;width:1px;height:18px;background:#dcdee2;"></div>
<div class="r" style="left:535px;top:425px;width:1px;height:18px;background:#dcdee2;"></div>
<div class="r" style="left:592px;top:425px;width:1px;height:18px;background:#dcdee2;"></div>
<div class="r" style="left:661px;top:425px;width:1px;height:18px;background:#dcdee2;"></div>
<div class="r" style="left:776px;top:425px;width:1px;height:18px;background:#dcdee2;"></div>
<div class="r" style="left:856px;top:425px;width:1px;height:18px;background:#dcdee2;"></div>
<div class="r" style="left:925px;top:425px;width:1px;height:18px;background:#dcdee2;"></div>
<div class="r" style="left:994px;top:425px;width:1px;height:18px;background:#dcdee2;"></div>
<div class="r" style="left:1086px;top:425px;width:1px;height:18px;background:#dcdee2;"></div>
<div class="r" style="left:1143px;top:425px;width:1px;height:18px;background:#dcdee2;"></div>
<div class="r" style="left:1200px;top:425px;width:1px;height:18px;background:#dcdee2;"></div>
<div class="r" style="left:1315px;top:425px;width:1px;height:18px;background:#dcdee2;"></div>
<div class="r ck" style="left:36px;top:427px"></div>
<div class="t" style="left:90px;top:428.86px;font-size:11px;color:#0c0c0c;letter-spacing:-0.333px;">110 - FAKTORY</div>
<div class="t" style="left:298px;top:428.86px;font-size:11px;color:#0c0c0c;letter-spacing:-0.18px;">5 - JS Freios S.A.</div>
<div class="t" style="left:505px;top:428.86px;font-size:11px;color:#0c0c0c;letter-spacing:0px;">PA</div>
<div class="t" style="right:772px;top:428.86px;font-size:11px;color:#0c0c0c;letter-spacing:0px;">5</div>
<div class="t" style="right:703px;top:428.86px;font-size:11px;color:#0c0c0c;letter-spacing:0px;">2</div>
<div class="t" style="left:861px;top:428.86px;font-size:11px;color:#0c0c0c;letter-spacing:0.111px;">20/06/2019</div>
<div class="t" style="right:371px;top:428.86px;font-size:11px;color:#0c0c0c;letter-spacing:0.1px;">625,00</div>
<div class="t" style="right:279px;top:428.86px;font-size:11px;color:#0c0c0c;letter-spacing:0.1px;">625,00</div>
<div class="t" style="left:1090px;top:428.86px;font-size:11px;color:#0c0c0c;letter-spacing:-0.2px;">Manual</div>
<div class="t" style="left:1205px;top:428.86px;font-size:11px;color:#0c0c0c;letter-spacing:-0.25px;">Administrador</div>
<div class="r dot red" style="left:1332px;top:429px"></div>
<div class="r" style="left:0px;top:444px;width:1358px;height:18px;background:#fafaf1;"></div>
<div class="r" style="left:0px;top:462px;width:1358px;height:1px;background:#dcdee2;"></div>
<div class="r" style="left:85px;top:444px;width:1px;height:18px;background:#dcdee2;"></div>
<div class="r" style="left:293px;top:444px;width:1px;height:18px;background:#dcdee2;"></div>
<div class="r" style="left:501px;top:444px;width:1px;height:18px;background:#dcdee2;"></div>
<div class="r" style="left:535px;top:444px;width:1px;height:18px;background:#dcdee2;"></div>
<div class="r" style="left:592px;top:444px;width:1px;height:18px;background:#dcdee2;"></div>
<div class="r" style="left:661px;top:444px;width:1px;height:18px;background:#dcdee2;"></div>
<div class="r" style="left:776px;top:444px;width:1px;height:18px;background:#dcdee2;"></div>
<div class="r" style="left:856px;top:444px;width:1px;height:18px;background:#dcdee2;"></div>
<div class="r" style="left:925px;top:444px;width:1px;height:18px;background:#dcdee2;"></div>
<div class="r" style="left:994px;top:444px;width:1px;height:18px;background:#dcdee2;"></div>
<div class="r" style="left:1086px;top:444px;width:1px;height:18px;background:#dcdee2;"></div>
<div class="r" style="left:1143px;top:444px;width:1px;height:18px;background:#dcdee2;"></div>
<div class="r" style="left:1200px;top:444px;width:1px;height:18px;background:#dcdee2;"></div>
<div class="r" style="left:1315px;top:444px;width:1px;height:18px;background:#dcdee2;"></div>
<div class="r ck" style="left:36px;top:446px"></div>
<div class="t" style="left:90px;top:447.86px;font-size:11px;color:#0c0c0c;letter-spacing:-0.333px;">110 - FAKTORY</div>
<div class="t" style="left:298px;top:447.86px;font-size:11px;color:#0c0c0c;letter-spacing:-0.18px;">5 - JS Freios S.A.</div>
<div class="t" style="left:505px;top:447.86px;font-size:11px;color:#0c0c0c;letter-spacing:0px;">PA</div>
<div class="t" style="right:772px;top:447.86px;font-size:11px;color:#0c0c0c;letter-spacing:0px;">5</div>
<div class="t" style="right:703px;top:447.86px;font-size:11px;color:#0c0c0c;letter-spacing:0px;">3</div>
<div class="t" style="left:861px;top:447.86px;font-size:11px;color:#0c0c0c;letter-spacing:0.111px;">20/07/2019</div>
<div class="t" style="right:371px;top:447.86px;font-size:11px;color:#0c0c0c;letter-spacing:0.1px;">625,00</div>
<div class="t" style="right:279px;top:447.86px;font-size:11px;color:#0c0c0c;letter-spacing:0.1px;">625,00</div>
<div class="t" style="left:1090px;top:447.86px;font-size:11px;color:#0c0c0c;letter-spacing:-0.2px;">Manual</div>
<div class="t" style="left:1205px;top:447.86px;font-size:11px;color:#0c0c0c;letter-spacing:-0.25px;">Administrador</div>
<div class="r dot red" style="left:1332px;top:448px"></div>
<div class="r" style="left:0px;top:463px;width:1358px;height:18px;background:#f1f4f9;"></div>
<div class="r" style="left:0px;top:481px;width:1358px;height:1px;background:#dcdee2;"></div>
<div class="r" style="left:85px;top:463px;width:1px;height:18px;background:#dcdee2;"></div>
<div class="r" style="left:293px;top:463px;width:1px;height:18px;background:#dcdee2;"></div>
<div class="r" style="left:501px;top:463px;width:1px;height:18px;background:#dcdee2;"></div>
<div class="r" style="left:535px;top:463px;width:1px;height:18px;background:#dcdee2;"></div>
<div class="r" style="left:592px;top:463px;width:1px;height:18px;background:#dcdee2;"></div>
<div class="r" style="left:661px;top:463px;width:1px;height:18px;background:#dcdee2;"></div>
<div class="r" style="left:776px;top:463px;width:1px;height:18px;background:#dcdee2;"></div>
<div class="r" style="left:856px;top:463px;width:1px;height:18px;background:#dcdee2;"></div>
<div class="r" style="left:925px;top:463px;width:1px;height:18px;background:#dcdee2;"></div>
<div class="r" style="left:994px;top:463px;width:1px;height:18px;background:#dcdee2;"></div>
<div class="r" style="left:1086px;top:463px;width:1px;height:18px;background:#dcdee2;"></div>
<div class="r" style="left:1143px;top:463px;width:1px;height:18px;background:#dcdee2;"></div>
<div class="r" style="left:1200px;top:463px;width:1px;height:18px;background:#dcdee2;"></div>
<div class="r" style="left:1315px;top:463px;width:1px;height:18px;background:#dcdee2;"></div>
<div class="r ck" style="left:36px;top:465px"></div>
<div class="t" style="left:90px;top:466.86px;font-size:11px;color:#0c0c0c;letter-spacing:-0.333px;">110 - FAKTORY</div>
<div class="t" style="left:298px;top:466.86px;font-size:11px;color:#0c0c0c;letter-spacing:-0.18px;">5 - JS Freios S.A.</div>
<div class="t" style="left:505px;top:466.86px;font-size:11px;color:#0c0c0c;letter-spacing:0px;">PA</div>
<div class="t" style="right:772px;top:466.86px;font-size:11px;color:#0c0c0c;letter-spacing:0px;">5</div>
<div class="t" style="right:703px;top:466.86px;font-size:11px;color:#0c0c0c;letter-spacing:0px;">4</div>
<div class="t" style="left:861px;top:466.86px;font-size:11px;color:#0c0c0c;letter-spacing:0.111px;">19/08/2019</div>
<div class="t" style="right:371px;top:466.86px;font-size:11px;color:#0c0c0c;letter-spacing:0.1px;">625,00</div>
<div class="t" style="right:279px;top:466.86px;font-size:11px;color:#0c0c0c;letter-spacing:0.1px;">625,00</div>
<div class="t" style="left:1090px;top:466.86px;font-size:11px;color:#0c0c0c;letter-spacing:-0.2px;">Manual</div>
<div class="t" style="left:1205px;top:466.86px;font-size:11px;color:#0c0c0c;letter-spacing:-0.25px;">Administrador</div>
<div class="r dot red" style="left:1332px;top:467px"></div>
<div class="r" style="left:0px;top:488px;width:1359px;height:38px;background:#f0f0f0;"></div>
<div class="r btn" style="left:8px;top:494px;width:100px;height:25px"></div>
<div class="r btn" style="left:116px;top:494px;width:106px;height:25px"></div>
<div class="t" style="left:24px;top:502.86px;font-size:11px;color:#3a3a3a;letter-spacing:0.091px;">Marcar Todos</div>
<div class="t" style="left:127px;top:502.86px;font-size:11px;color:#3a3a3a;letter-spacing:-0.143px;">Desmarcar Todos</div>
<div class="r" style="left:0px;top:526px;width:1359px;height:1px;background:#d6d6d6;"></div>
<div class="r" style="left:0px;top:527px;width:1359px;height:21px;background:#f0f0f0;"></div>
<div class="r" style="left:147px;top:528px;width:176px;height:19px;background:#f6f6f6;"></div>
<div class="r" style="left:0px;top:548px;width:1362px;height:1px;background:#c8c8c8;"></div>
<div class="t" style="left:3px;top:532.03px;font-size:12px;color:#2a2a2a;letter-spacing:-0.154px;">Encontrado(s) 12 registros.</div>
<div class="r dot red" style="left:161px;top:533px"></div>
<div class="t" style="left:174px;top:532.86px;font-size:11px;color:#2a2a2a;letter-spacing:0.2px;">Aberto</div>
<div class="r dot yel" style="left:223px;top:533px"></div>
<div class="t" style="left:235px;top:532.86px;font-size:11px;color:#2a2a2a;letter-spacing:-0.167px;">Parcial</div>
<div class="r dot grn" style="left:283px;top:533px"></div>
<div class="t" style="left:296px;top:532.86px;font-size:11px;color:#2a2a2a;letter-spacing:0.25px;">Total</div></body></html>
